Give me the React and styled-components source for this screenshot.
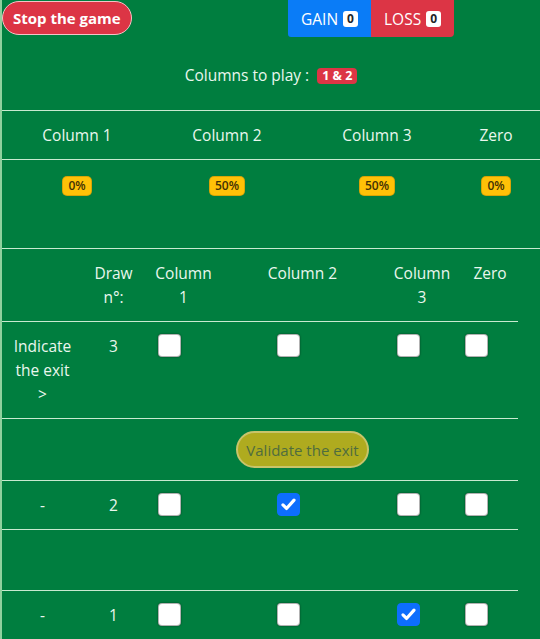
import React from "react";
import styled, { createGlobalStyle, css } from "styled-components";

const LINE = "#c8ead0";

const GlobalStyle = createGlobalStyle`
  html, body {
    margin: 0;
    padding: 0;
    background: #007e3f;
  }
  body {
    font-family: "Open Sans", "Liberation Sans", sans-serif;
  }
`;

const topColumns = [
  { label: "Column 1", rate: "0%" },
  { label: "Column 2", rate: "50%" },
  { label: "Column 3", rate: "50%" },
  { label: "Zero", rate: "0%" },
];

const draws = [
  { id: 2, checks: [false, true, false, false] },
  { id: 1, checks: [false, false, true, false] },
];

const Page = styled.div`
  min-height: 100vh;
  border-left: 2px solid #8fd19e;
  background: #007e3f;
  color: #eaf7ee;
  font-size: 15.5px;
  line-height: 24px;
`;

const TopBar = styled.div`
  display: flex;
  align-items: flex-start;
`;

const StopButton = styled.button`
  margin-top: 1px;
  height: 34px;
  padding: 0 10px;
  border: 1px solid #f5c2c7;
  border-radius: 17px;
  background: #dc3545;
  color: #fff;
  font-family: inherit;
  font-size: 15px;
  font-weight: 700;
  cursor: pointer;
`;

const ScoreGroup = styled.div`
  display: flex;
  margin-left: auto;
  margin-right: 86px;
`;

const ScoreButton = styled.div`
  width: 83px;
  height: 37px;
  display: flex;
  align-items: center;
  justify-content: center;
  gap: 5px;
  color: #fff;
  font-size: 15.5px;
  background: ${(p) => (p.$tone === "blue" ? "#0a7cf7" : "#dc3545")};
  border-radius: ${(p) => (p.$tone === "blue" ? "0 0 0 3px" : "0 0 4px 0")};
`;

const Counter = styled.span`
  background: #fff;
  color: #212529;
  font-size: 12px;
  font-weight: 700;
  line-height: 12px;
  padding: 2px 4px;
  border-radius: 3px;
`;

const PlayInfo = styled.div`
  text-align: center;
  padding: 26px 0 23px;
  border-bottom: 1px solid ${LINE};
`;

const RedTag = styled.span`
  display: inline-block;
  margin-left: 4px;
  padding: 2px 5px;
  background: #dc3545;
  color: #fff;
  font-size: 12.5px;
  font-weight: 700;
  line-height: 12px;
  border-radius: 4px;
  vertical-align: 1px;
`;

const SummaryRow = styled.div`
  display: grid;
  grid-template-columns: 150px 150px 150px 1fr;
  text-align: center;
  padding: ${(p) => (p.$tall ? "12px 0 52px" : "12px 0")};
  border-bottom: 1px solid ${LINE};
`;

const RateTag = styled.span`
  display: inline-block;
  padding: 3px 5px;
  background: #ffc107;
  color: #3f3105;
  font-size: 12px;
  font-weight: 600;
  line-height: 12px;
  border-radius: 4px;
  box-shadow: 0 0 0 1px #d9a406;
`;

const Table = styled.div`
  width: 516px;
`;

const TableRow = styled.div`
  display: grid;
  grid-template-columns: 81px 61px 79px 159px 80px 56px;
  border-bottom: 1px solid ${LINE};
`;

const Cell = styled.div`
  display: flex;
  justify-content: center;
  align-items: flex-start;
  text-align: center;
  padding: ${(p) => (p.$first ? "12px 10px" : "12px 8px")};
  min-height: ${(p) => (p.$spacer ? "36px" : "auto")};
  min-width: 0;
`;

const Box = styled.span`
  flex: none;
  width: 23px;
  height: 23px;
  margin-right: 28px;
  box-sizing: border-box;
  display: flex;
  align-items: center;
  justify-content: center;
  border-radius: 4px;
  ${(p) =>
    p.$checked
      ? css`
          background: #0d6efd;
          border: 1px solid #0d6efd;
        `
      : css`
          background: #fff;
          border: 1px solid rgba(0, 0, 0, 0.3);
          box-shadow: 0 0 2px rgba(0, 0, 0, 0.5);
        `}
`;

const ValidateButton = styled.button`
  height: 37px;
  padding: 0 8px;
  border: 2px solid #c8c46a;
  border-radius: 19px;
  background: #afab1f;
  color: #4f6d3e;
  font-family: inherit;
  font-size: 15px;
  white-space: nowrap;
`;

const Checkbox = ({ checked }) => (
  <Box $checked={checked} role="checkbox" aria-checked={checked}>
    {checked && (
      <svg width="19" height="19" viewBox="0 0 24 24" fill="none">
        <path
          d="M5 12.5l4.5 4.5L19 6.5"
          stroke="#fff"
          strokeWidth="4"
          strokeLinecap="round"
          strokeLinejoin="round"
        />
      </svg>
    )}
  </Box>
);

const DrawRow = ({ label, id, checks }) => (
  <TableRow>
    <Cell $first>{label}</Cell>
    <Cell>{id}</Cell>
    {checks.map((c, i) => (
      <Cell key={i}>
        <Checkbox checked={c} />
      </Cell>
    ))}
  </TableRow>
);

export default function App() {
  return (
    <Page>
      <GlobalStyle />
      <TopBar>
        <StopButton>Stop the game</StopButton>
        <ScoreGroup>
          <ScoreButton $tone="blue">
            GAIN <Counter>0</Counter>
          </ScoreButton>
          <ScoreButton $tone="red">
            LOSS <Counter>0</Counter>
          </ScoreButton>
        </ScoreGroup>
      </TopBar>

      <PlayInfo>
        Columns to play : <RedTag>1 &amp; 2</RedTag>
      </PlayInfo>

      <SummaryRow>
        {topColumns.map((c) => (
          <div key={c.label}>{c.label}</div>
        ))}
      </SummaryRow>
      <SummaryRow $tall>
        {topColumns.map((c) => (
          <div key={c.label}>
            <RateTag>{c.rate}</RateTag>
          </div>
        ))}
      </SummaryRow>

      <Table>
        <TableRow>
          <Cell $first />
          <Cell>Draw n°:</Cell>
          <Cell>Column 1</Cell>
          <Cell>Column 2</Cell>
          <Cell>Column 3</Cell>
          <Cell>Zero</Cell>
        </TableRow>

        <DrawRow label="Indicate the exit >" id={3} checks={[false, false, false, false]} />

        <TableRow>
          <Cell $first />
          <Cell />
          <Cell />
          <Cell>
            <ValidateButton>Validate the exit</ValidateButton>
          </Cell>
          <Cell />
          <Cell />
        </TableRow>

        <DrawRow label="-" id={draws[0].id} checks={draws[0].checks} />

        <TableRow>
          <Cell $first $spacer />
          <Cell />
          <Cell />
          <Cell />
          <Cell />
          <Cell />
        </TableRow>

        <DrawRow label="-" id={draws[1].id} checks={draws[1].checks} />
      </Table>
    </Page>
  );
}
